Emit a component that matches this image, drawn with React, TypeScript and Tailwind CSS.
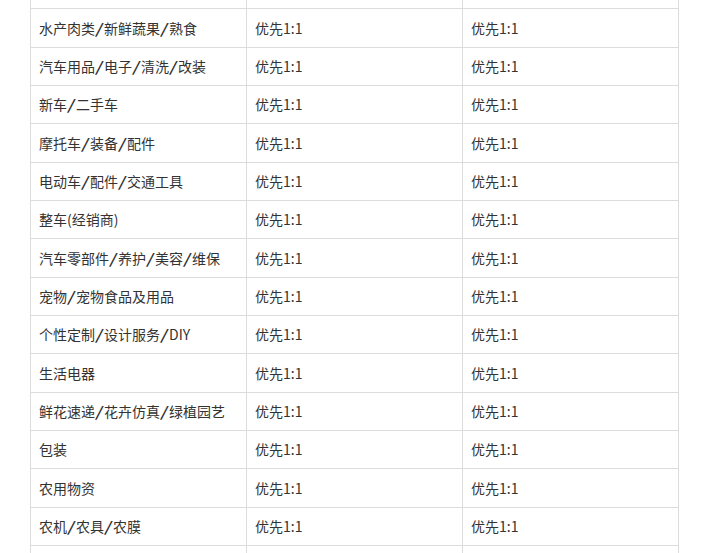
const rows = [
  '',
  '水产肉类/新鲜蔬果/熟食',
  '汽车用品/电子/清洗/改装',
  '新车/二手车',
  '摩托车/装备/配件',
  '电动车/配件/交通工具',
  '整车(经销商)',
  '汽车零部件/养护/美容/维保',
  '宠物/宠物食品及用品',
  '个性定制/设计服务/DIY',
  '生活电器',
  '鲜花速递/花卉仿真/绿植园艺',
  '包装',
  '农用物资',
  '农机/农具/农膜',
  '',
]

// 斜杠在原图中比较宽
function Name({ text }: { text: string }) {
  const parts = text.split('/')
  return (
    <>
      {parts.map((p, i) => (
        <span key={i}>
          {i > 0 && <span className="inline-block w-[9px] scale-x-[1.7] text-center">/</span>}
          {p}
        </span>
      ))}
    </>
  )
}

export default function App() {
  return (
    <div
      className="h-[553px] w-[705px] overflow-hidden bg-white pl-[30px] text-[14px] text-[#333]"
      style={{ fontFamily: '"Microsoft YaHei", "Noto Sans CJK SC", "Noto Sans", sans-serif' }}
    >
      {/* 表格 */}
      <div className="-mt-[29px] w-[649px] border-l border-[#dcdcdc]">
        {rows.map((name, i) => (
          <div key={i} className="flex h-[38.35px] border-b border-[#dcdcdc]">
            <div className="flex w-[216px] items-center whitespace-nowrap border-r border-[#dcdcdc] pl-2">
              <Name text={name} />
            </div>
            <div className="flex w-[216px] items-center border-r border-[#dcdcdc] pl-2">
              {name && '优先1:1'}
            </div>
            <div className="flex w-[216px] items-center border-r border-[#dcdcdc] pl-2">
              {name && '优先1:1'}
            </div>
          </div>
        ))}
      </div>
    </div>
  )
}
